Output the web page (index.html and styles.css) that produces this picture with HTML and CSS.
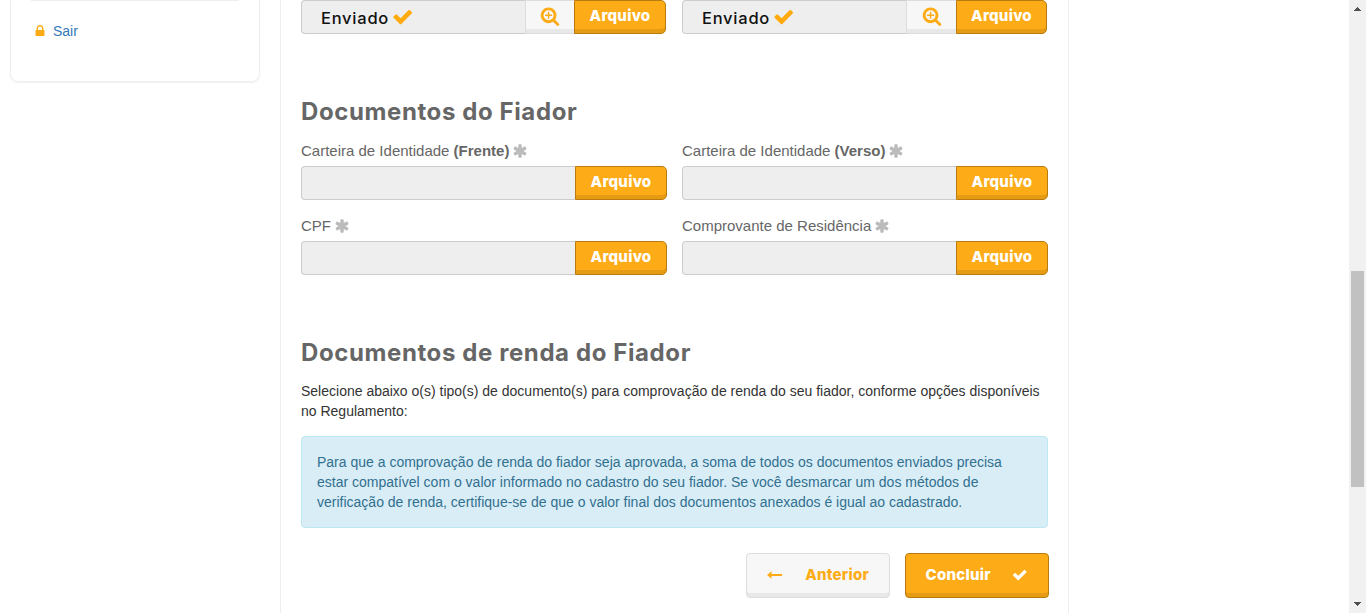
FILE: index.html
```html
<!DOCTYPE html>
<html lang="pt-BR">
<head>
<meta charset="utf-8">
<title>Documentos do Fiador</title>
<link rel="stylesheet" href="styles.css">
</head>
<body>
<svg class="defs" aria-hidden="true">
  <symbol id="check" viewBox="0 0 1792 1792"><path d="M1671 566q0 40-28 68l-724 724-136 136q-28 28-68 28t-68-28l-136-136-362-362q-28-28-28-68t28-68l136-136q28-28 68-28t68 28l294 295 656-657q28-28 68-28t68 28l136 136q28 28 28 68z"/></symbol>
  <symbol id="lock" viewBox="0 0 1792 1792"><path d="M640 768h512v-192q0-106-75-181t-181-75-181 75-75 181v192zm832 96v576q0 40-28 68t-68 28h-960q-40 0-68-28t-28-68v-576q0-40 28-68t68-28h32v-192q0-184 132-316t316-132 316 132 132 316v192h32q40 0 68 28t28 68z"/></symbol>
  <symbol id="asterisk" viewBox="0 0 1792 1792"><path d="M1546 1050q46 26 59.500 77.500t-12.500 97.500l-64 110q-26 46-77.500 59.500t-97.500-12.500l-266-153v307q0 52-38 90t-90 38h-128q-52 0-90-38t-38-90v-307l-266 153q-46 26-97.500 12.500t-77.500-59.500l-64-110q-26-46-12.500-97.500t59.500-77.500l266-154-266-154q-46-26-59.500-77.500t12.500-97.500l64-110q26-46 77.500-59.500t97.500 12.500l266 153v-307q0-52 38-90t90-38h128q52 0 90 38t38 90v307l266-153q46-26 97.500-12.500t77.500 59.500l64 110q26 46 12.500 97.500t-59.500 77.500l-266 154z"/></symbol>
  <symbol id="search-plus" viewBox="0 0 1792 1792"><path d="M1088 800v64q0 13-9.500 22.500t-22.500 9.500h-224v224q0 13-9.500 22.500t-22.500 9.500h-64q-13 0-22.500-9.500t-9.500-22.500v-224h-224q-13 0-22.500-9.500t-9.500-22.500v-64q0-13 9.500-22.500t22.500-9.500h224v-224q0-13 9.500-22.500t22.500-9.500h64q13 0 22.500 9.500t9.500 22.500v224h224q13 0 22.500 9.500t9.500 22.500zm128 32q0-185-131.500-316.500t-316.500-131.500-316.500 131.500-131.500 316.500 131.500 316.500 316.500 131.500 316.500-131.500 131.500-316.500zm512 832q0 53-37.500 90.500t-90.500 37.500q-54 0-90-38l-343-342q-179 124-399 124-143 0-273.500-55.500t-225-150-150-225-55.500-273.500 55.500-273.500 150-225 225-150 273.500-55.500 273.500 55.500 225 150 150 225 55.500 273.500q0 220-124 399l343 343q37 37 37 90z"/></symbol>
  <symbol id="arrow" viewBox="0 0 15 8"><path d="M0 4L4.500 .2V3H15V5H4.500V7.800z"/></symbol>
</svg>
<div class="page">
  <aside class="sidebar">
    <nav class="side-card">
      <a class="side-link" href="#"><svg class="icon-lock"><use href="#lock"/></svg><span>Sair</span></a>
    </nav>
  </aside>
  <main class="panel">
    <div class="row sent-row">
      <div class="file-group">
        <div class="file-name">Enviado<svg class="icon-sent"><use href="#check"/></svg></div>
        <button class="btn btn-light btn-zoom" aria-label="Visualizar"><svg class="icon-zoom"><use href="#search-plus"/></svg></button>
        <button class="btn btn-primary btn-file">Arquivo</button>
      </div>
      <div class="file-group">
        <div class="file-name">Enviado<svg class="icon-sent"><use href="#check"/></svg></div>
        <button class="btn btn-light btn-zoom btn-zoom-wide" aria-label="Visualizar"><svg class="icon-zoom"><use href="#search-plus"/></svg></button>
        <button class="btn btn-primary btn-file btn-file-narrow">Arquivo</button>
      </div>
    </div>

    <h2 class="title">Documentos do Fiador</h2>
    <div class="row fields">
      <div class="field">
        <label class="label">Carteira de Identidade <b>(Frente)</b><svg class="icon-required"><use href="#asterisk"/></svg></label>
        <div class="file-group"><div class="file-name"></div><button class="btn btn-primary btn-file">Arquivo</button></div>
      </div>
      <div class="field">
        <label class="label">Carteira de Identidade <b>(Verso)</b><svg class="icon-required"><use href="#asterisk"/></svg></label>
        <div class="file-group"><div class="file-name"></div><button class="btn btn-primary btn-file">Arquivo</button></div>
      </div>
      <div class="field">
        <label class="label">CPF<svg class="icon-required"><use href="#asterisk"/></svg></label>
        <div class="file-group"><div class="file-name"></div><button class="btn btn-primary btn-file">Arquivo</button></div>
      </div>
      <div class="field">
        <label class="label">Comprovante de Residência<svg class="icon-required"><use href="#asterisk"/></svg></label>
        <div class="file-group"><div class="file-name"></div><button class="btn btn-primary btn-file">Arquivo</button></div>
      </div>
    </div>

    <h2 class="title title-second">Documentos de renda do Fiador</h2>
    <p class="intro">Selecione abaixo o(s) tipo(s) de documento(s) para comprovação de renda do seu fiador, conforme opções disponíveis<br>no Regulamento:</p>
    <div class="alert">Para que a comprovação de renda do fiador seja aprovada, a soma de todos os documentos enviados precisa<br>estar compatível com o valor informado no cadastro do seu fiador. Se você desmarcar um dos métodos de<br>verificação de renda, certifique-se de que o valor final dos documentos anexados é igual ao cadastrado.</div>
    <div class="actions">
      <button class="btn btn-light btn-large"><svg class="icon-arrow"><use href="#arrow"/></svg><span>Anterior</span></button>
      <button class="btn btn-primary btn-large"><span>Concluir</span><svg class="icon-finish"><use href="#check"/></svg></button>
    </div>
  </main>
  <div class="scrollbar">
    <svg class="scroll-arrow" viewBox="0 0 7 4" shape-rendering="crispEdges"><path d="M3 0h1v1h1v1h1v1h1v1H0V3h1V2h1V1h1z"/></svg>
    <div class="thumb"></div>
    <svg class="scroll-arrow" viewBox="0 0 7 4" shape-rendering="crispEdges"><path d="M0 0h7v1H6v1H5v1H4v1H3V3H2V2H1V1H0z"/></svg>
  </div>
</div>
</body>
</html>
```
FILE: styles.css
```css
* { box-sizing: border-box; }
body { margin: 0; overflow: hidden; background: #fff; color: #333; font: 14px/20px "Liberation Sans", Arial, sans-serif; }
svg { fill: currentColor; flex: none; }
.defs { display: none; }
.page { display: flex; height: 613px; }

.sidebar { width: 280px; padding-left: 10px; }
.side-card { width: 250px; height: 82px; padding: 0 20px; border: 1px solid #eee; border-top: 0; border-radius: 0 0 8px 8px; box-shadow: 0 1px 2px rgba(0, 0, 0, .06); }
.side-link { display: flex; align-items: center; height: 41px; padding: 19px 0 0 2px; border-top: 1px solid #eee; color: #337ab7; text-decoration: none; }
.side-link span { margin-left: 6px; }
.icon-lock { width: 14px; height: 14px; color: #fdac18; }

.panel { width: 789px; padding: 0 19px 0 20px; border: solid #eee; border-width: 0 1px; }
.row { display: grid; grid-template-columns: 366px 366px; column-gap: 15px; }
.sent-row .file-group { width: 365px; }
.file-group { display: flex; height: 34px; }
.file-name { display: flex; flex: 1; align-items: center; padding: 1px 0 0 19px; border: 1px solid #ccc; border-right: 0; border-radius: 4px 0 0 4px; background: #eee; color: #111; font: 500 16.500px/20px Inter, sans-serif; letter-spacing: .75px; }
.icon-sent { width: 21.500px; height: 21.500px; margin: -2px 0 0 3px; color: #ffaa0d; }

.btn { display: flex; align-items: center; margin: 0; padding: 0; border: 1px solid; border-radius: 4px; font: 800 15px/20px Inter, sans-serif; letter-spacing: .25px; }
.btn-primary { border-color: #b97b0e; background: #fdac18; box-shadow: inset 0 -4px #e69b15; color: #fff; }
.btn-light { border-color: #ddd; background: #f7f7f7; box-shadow: inset 0 -4px #e8e8e8; color: #fdac18; }
.btn-file { justify-content: center; width: 92px; padding-bottom: 2px; border-radius: 0 5px 5px 0; }
.btn-file-narrow { width: 91px; }
.btn-zoom { justify-content: center; width: 49px; padding-bottom: 2px; border-right: 0; border-radius: 0; }
.btn-zoom-wide { width: 50px; }
.icon-zoom { width: 20px; height: 20px; }

.title { height: 34px; margin: 61px 0 12px; color: #666; font: 700 24px/34px Inter, sans-serif; letter-spacing: .6px; white-space: nowrap; }
.label { display: flex; align-items: center; height: 20px; margin-bottom: 5px; color: #666; font-size: 15px; white-space: pre; }
.icon-required { width: 16px; height: 16px; margin-left: 3px; color: #bbb; }
.fields { row-gap: 16px; }
.title-second { margin: 61px 0 11px; }
.intro { margin: 0 0 15px; white-space: nowrap; }
.alert { width: 747px; height: 92px; padding: 15px; border: 1px solid #bce8f1; border-radius: 4px; background: #d9edf7; color: #31708f; white-space: nowrap; }
.actions { display: flex; justify-content: flex-end; gap: 15px; margin-top: 25px; }
.btn-large { justify-content: space-between; width: 144px; height: 45px; padding: 0 20px 2px 19.500px; }
.icon-arrow { width: 15px; height: 8px; }
.icon-finish { width: 15.600px; height: 15.600px; }

.scrollbar { display: flex; flex-direction: column; align-items: center; width: 17px; height: 613px; margin-left: auto; padding: 7px 0; background: #f1f1f1; }
.scroll-arrow { width: 7px; height: 4px; color: #505050; }
.thumb { width: 13px; height: 216px; margin: 260px 0 auto; background: #c1c1c1; }
```
